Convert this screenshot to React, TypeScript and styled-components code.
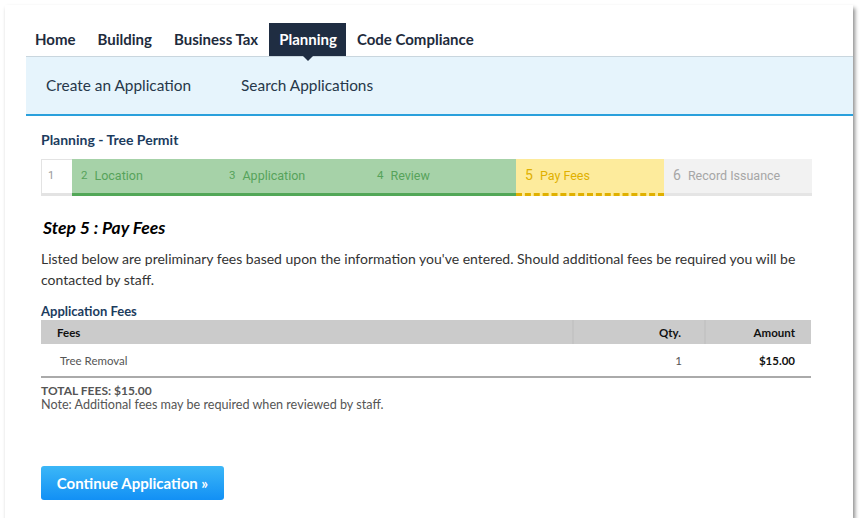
import React from "react";
import styled, { createGlobalStyle } from "styled-components";

const GlobalStyle = createGlobalStyle`
  html, body {
    margin: 0;
    padding: 0;
    background: #ffffff;
  }
  body {
    font-family: Lato, "Open Sans", Arial, sans-serif;
    color: #333;
  }
`;

const Frame = styled.div`
  margin: 5px 0 0 5px;
  width: 848px;
  height: 513px;
  background: #fff;
  box-shadow: 2px 3px 4px rgba(0, 0, 0, 0.45);
  padding-top: 18px;
  box-sizing: border-box;
  overflow: hidden;
`;

const Body = styled.div`
  margin-left: 21px;
`;

const TabBar = styled.nav`
  display: flex;
  height: 33px;
  border-bottom: 1px solid #c9d6de;
`;

const Tab = styled.div<{ $active?: boolean }>`
  position: relative;
  display: flex;
  align-items: center;
  padding: 0 11px 1px;
  font-size: 15px;
  font-weight: 700;
  color: ${(p) => (p.$active ? "#fff" : "#1e2b3c")};
  background: ${(p) => (p.$active ? "#1f2d42" : "transparent")};

  &:first-child {
    padding-left: 9px;
  }

  ${(p) =>
    p.$active &&
    `
    padding: 0 9px 1px 10px;

    &::after {
      content: "";
      position: absolute;
      left: 50%;
      bottom: -5px;
      margin-left: -5px;
      border-left: 5px solid transparent;
      border-right: 5px solid transparent;
      border-top: 5px solid #1f2d42;
      z-index: 2;
    }
  `}
`;

const SubNav = styled.div`
  display: flex;
  align-items: center;
  height: 57px;
  padding-left: 20px;
  background: #e6f4fc;
  border-bottom: 2px solid #2aa0dc;
`;

const SubLink = styled.div`
  font-size: 15.4px;
  color: #26384a;
  margin-right: 50px;
  padding-bottom: 2px;
`;

const Content = styled.div`
  padding: 15px 41px 0 15px;
`;

const PageTitle = styled.h2`
  margin: 0 0 10px;
  font-size: 14px;
  font-weight: 700;
  color: #1c3c5e;
  line-height: 18px;
`;

const Stepper = styled.div`
  display: flex;
  height: 37px;
  font-family: Roboto, Arial, sans-serif;
  font-size: 12.5px;
`;

type StepState = "first" | "done" | "current" | "todo";

const stepColors: Record<StepState, { bg: string; fg: string; line: string }> = {
  first: { bg: "#fff", fg: "#999", line: "3px solid #e3e3e3" },
  done: { bg: "#a6d2a8", fg: "#56a35b", line: "3px solid #52a757" },
  current: { bg: "#fdeb9c", fg: "#e0b000", line: "3px dashed #e0b000" },
  todo: { bg: "#f2f2f2", fg: "#a6a6a6", line: "3px solid #e5e5e5" },
};

const Step = styled.div<{ $state: StepState }>`
  display: flex;
  align-items: center;
  box-sizing: border-box;
  width: ${(p) => (p.$state === "first" ? "31px" : "148px")};
  padding-left: ${(p) => (p.$state === "first" ? "6px" : "9px")};
  padding-bottom: 2px;
  background: ${(p) => stepColors[p.$state].bg};
  color: ${(p) => stepColors[p.$state].fg};
  border-bottom: ${(p) => stepColors[p.$state].line};
  ${(p) =>
    p.$state === "first" &&
    `
    border-left: 1px solid #e3e3e3;
    border-top: 1px solid #e3e3e3;
    font-size: 11px;
  `}
`;

const StepNum = styled.span<{ $big?: boolean }>`
  margin-right: 7px;
  font-size: ${(p) => (p.$big ? "14px" : "11.5px")};
`;

const StepHeading = styled.h3`
  margin: 21px 0 0 2px;
  font-size: 17.5px;
  font-weight: 700;
  font-style: italic;
  color: #000;
  line-height: 22px;
`;

const Intro = styled.p`
  margin: 9px 0 0;
  font-size: 14px;
  line-height: 21px;
  color: #333;
`;

const SectionLabel = styled.div`
  margin-top: 13px;
  font-size: 13px;
  font-weight: 700;
  color: #1c3c5e;
  line-height: 17px;
`;

const FeeTable = styled.table`
  width: 770px;
  table-layout: fixed;
  border-collapse: collapse;
  font-size: 11.5px;
  border-bottom: 2px solid #aaa;
`;

const Th = styled.th<{ $right?: boolean; $w?: number; $pad?: number }>`
  box-sizing: border-box;
  height: 24px;
  padding: 0 ${(p) => (p.$right ? `${p.$pad ?? 16}px` : "0")} 0 ${(p) => (p.$right ? "0" : "16px")};
  background: #cbcbcb;
  text-align: ${(p) => (p.$right ? "right" : "left")};
  font-weight: 700;
  color: #111;
  width: ${(p) => (p.$w ? `${p.$w}px` : "auto")};
  border-left: 2px solid #c4c4c4;
  &:first-child {
    border-left: none;
  }
`;

const Td = styled.td<{ $right?: boolean; $bold?: boolean; $pad?: number }>`
  box-sizing: border-box;
  height: 33px;
  padding: 0 ${(p) => (p.$right ? `${p.$pad ?? 16}px` : "0")} 0 ${(p) => (p.$right ? "0" : "19px")};
  text-align: ${(p) => (p.$right ? "right" : "left")};
  font-weight: ${(p) => (p.$bold ? 700 : 400)};
  color: ${(p) => (p.$bold ? "#111" : "#555")};
`;

const Totals = styled.div`
  margin-top: 6px;
  font-size: 12.6px;
  line-height: 14px;
  color: #555;
`;

const TotalLine = styled.div`
  font-size: 12px;
  font-weight: 700;
`;

const ContinueButton = styled.button`
  margin-top: 54px;
  width: 183px;
  height: 34px;
  padding: 0;
  border: none;
  border-radius: 3px;
  background: linear-gradient(#3cb7f7, #1290f5);
  color: #fff;
  font-family: Lato, "Open Sans", Arial, sans-serif;
  font-size: 15px;
  font-weight: 700;
  cursor: pointer;
`;

const steps: { n: string; label: string; state: StepState }[] = [
  { n: "2", label: "Location", state: "done" },
  { n: "3", label: "Application", state: "done" },
  { n: "4", label: "Review", state: "done" },
  { n: "5", label: "Pay Fees", state: "current" },
  { n: "6", label: "Record Issuance", state: "todo" },
];

export default function App() {
  return (
    <>
      <GlobalStyle />
      <Frame>
        <Body>
          <TabBar>
            <Tab>Home</Tab>
            <Tab>Building</Tab>
            <Tab>Business Tax</Tab>
            <Tab $active>Planning</Tab>
            <Tab>Code Compliance</Tab>
          </TabBar>
          <SubNav>
            <SubLink>Create an Application</SubLink>
            <SubLink>Search Applications</SubLink>
          </SubNav>

          <Content>
            <PageTitle>Planning - Tree Permit</PageTitle>

            <Stepper>
              <Step $state="first">1</Step>
              {steps.map((s) => (
                <Step key={s.n} $state={s.state}>
                  <StepNum $big={s.state === "current" || s.state === "todo"}>{s.n}</StepNum>
                  {s.label}
                </Step>
              ))}
            </Stepper>

            <StepHeading>Step 5 : Pay Fees</StepHeading>
            <Intro>
              Listed below are preliminary fees based upon the information you've entered. Should additional fees be
              required you will be contacted by staff.
            </Intro>

            <SectionLabel>Application Fees</SectionLabel>
            <FeeTable>
              <thead>
                <tr>
                  <Th>Fees</Th>
                  <Th $right $w={132} $pad={23}>
                    Qty.
                  </Th>
                  <Th $right $w={106}>
                    Amount
                  </Th>
                </tr>
              </thead>
              <tbody>
                <tr>
                  <Td>Tree Removal</Td>
                  <Td $right $pad={23}>
                    1
                  </Td>
                  <Td $right $bold>
                    $15.00
                  </Td>
                </tr>
              </tbody>
            </FeeTable>

            <Totals>
              <TotalLine>TOTAL FEES: $15.00</TotalLine>
              <div>Note: Additional fees may be required when reviewed by staff.</div>
            </Totals>

            <ContinueButton>Continue Application »</ContinueButton>
          </Content>
        </Body>
      </Frame>
    </>
  );
}
